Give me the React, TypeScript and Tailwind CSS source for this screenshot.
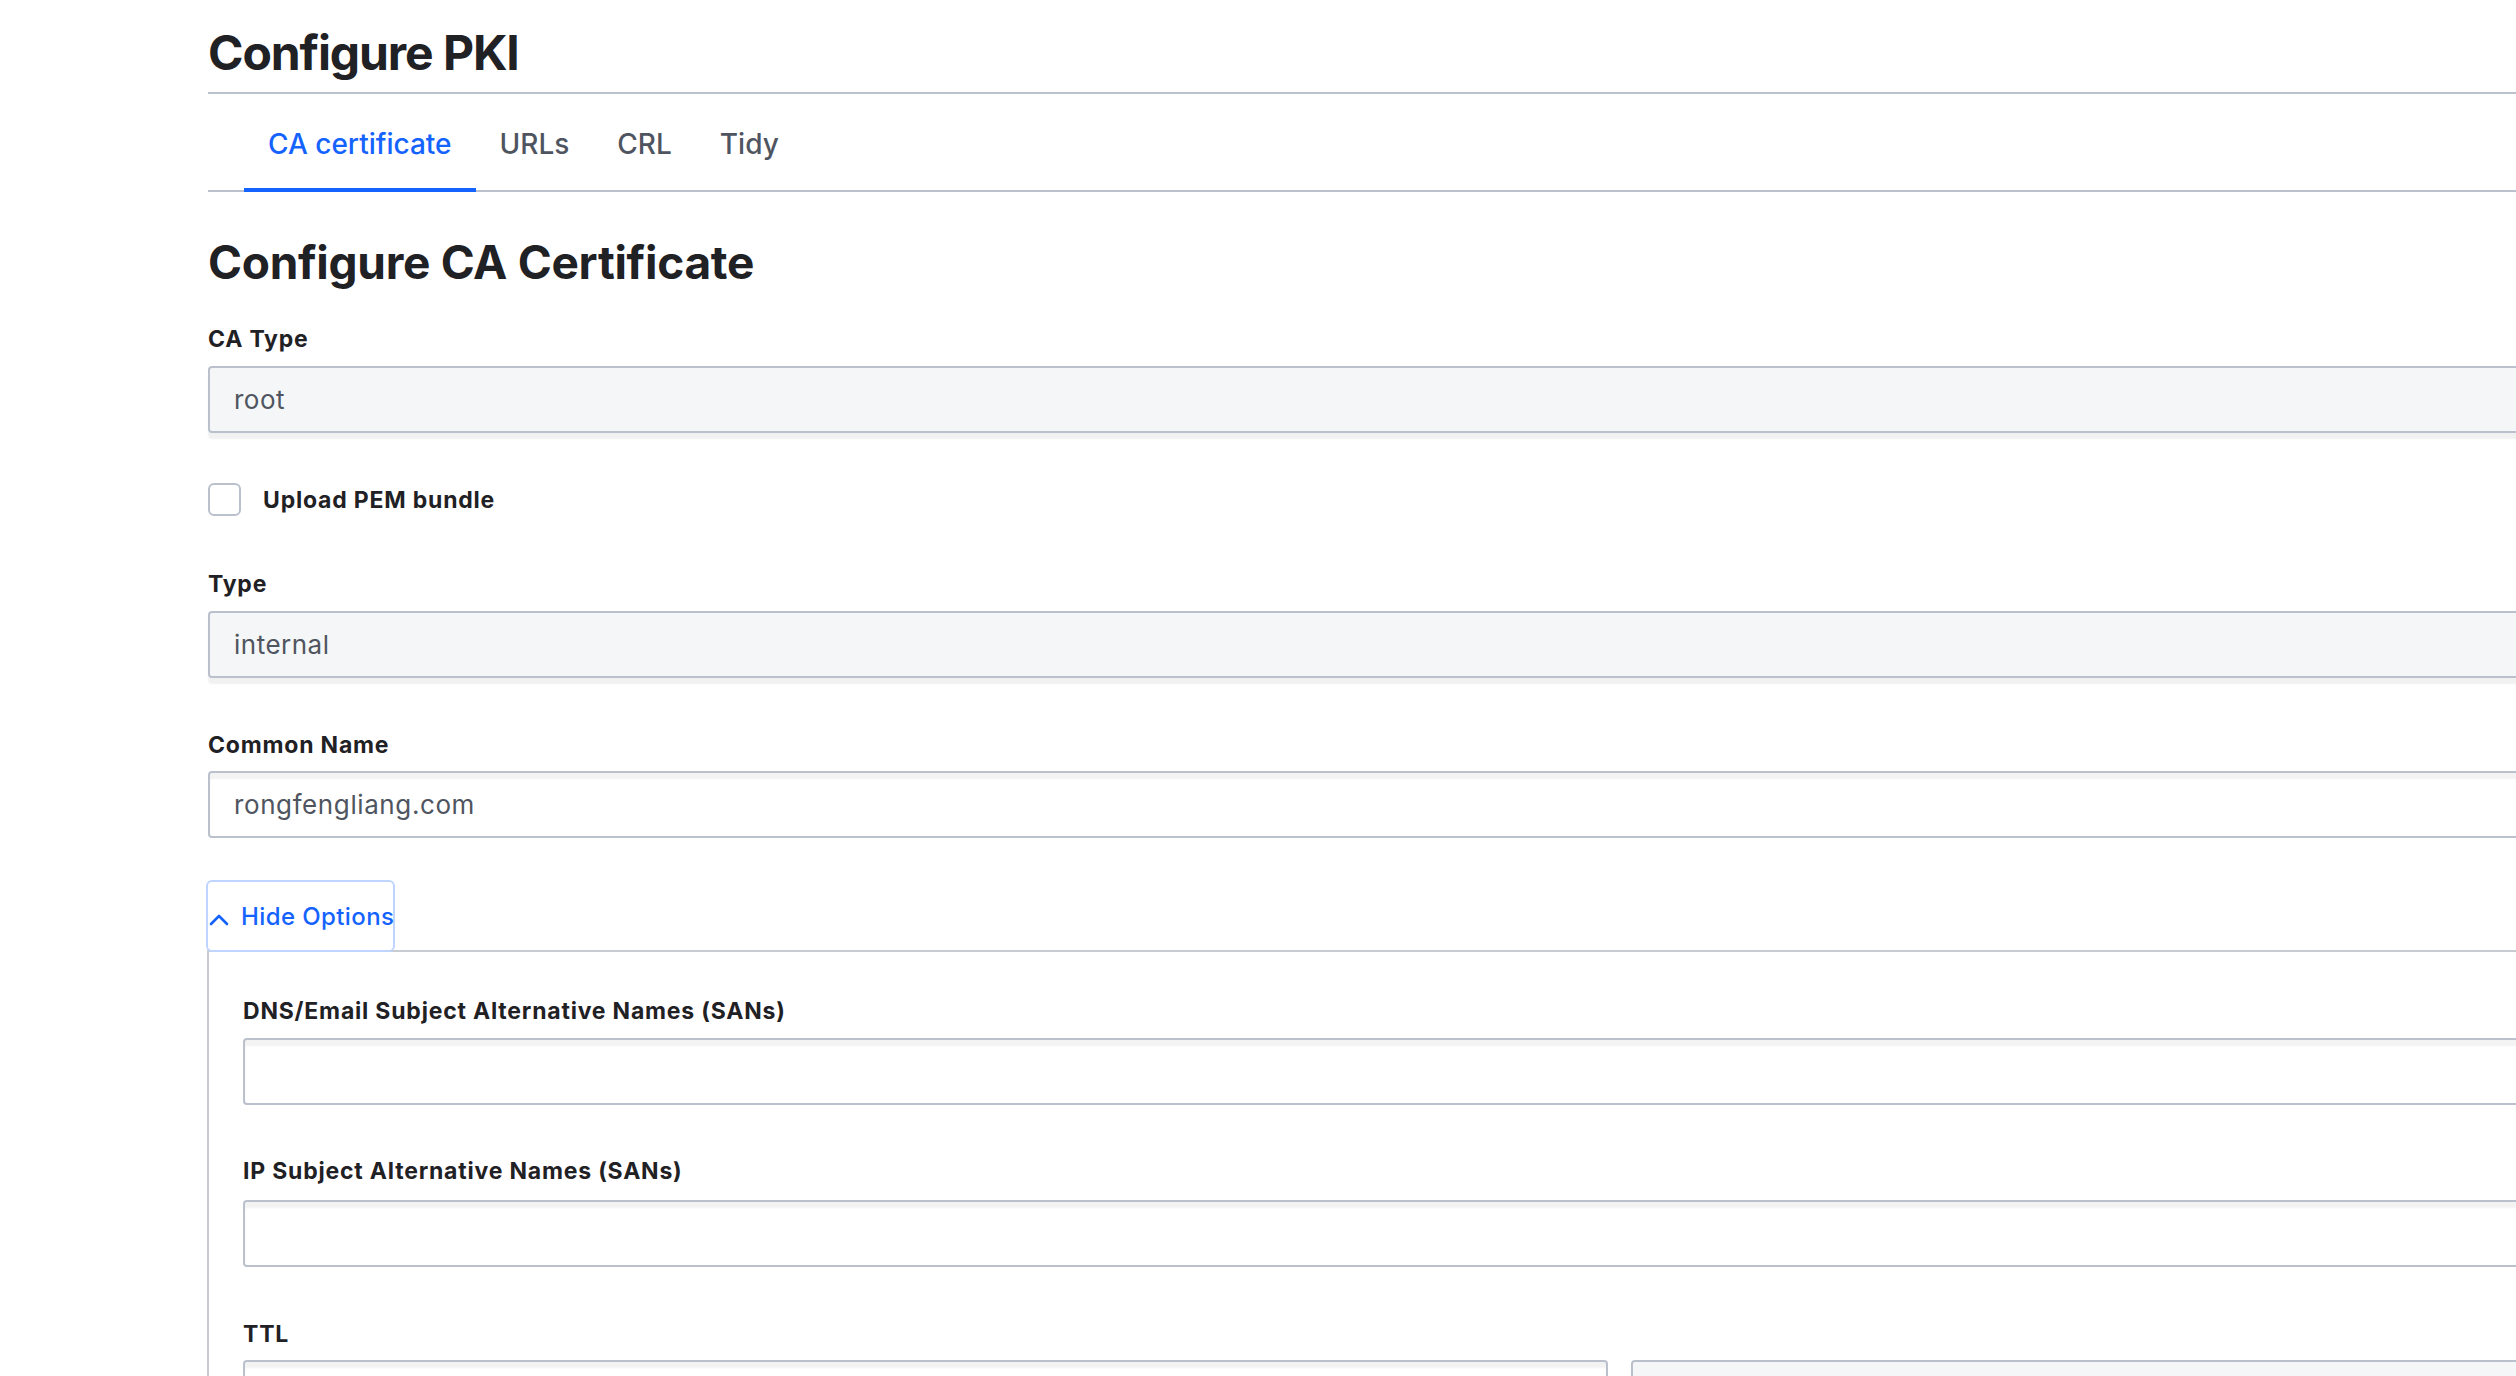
import React from "react";

const Label = ({ children, className = "" }: { children: React.ReactNode; className?: string }) => (
  <div className={`text-[23px] leading-[28px] font-bold tracking-[0.8px] text-[#1f2124] ${className}`}>{children}</div>
);

const SelectBox = ({ value, className = "" }: { value?: string; className?: string }) => (
  <div
    className={`h-[67px] bg-[#f5f6f7] border-2 border-[#bac1cc] rounded-[4px] shadow-[0_6px_2px_rgba(10,10,10,0.06)] flex items-center pl-[24px] text-[26px] tracking-[0.5px] text-[#4f5560] ${className}`}
  >
    {value}
  </div>
);

const TextInput = ({ value, className = "" }: { value?: string; className?: string }) => (
  <div
    className={`h-[67px] bg-white border-2 border-[#bac1cc] rounded-[4px] shadow-[inset_0_6px_2px_rgba(10,10,10,0.05)] flex items-center pl-[24px] text-[26px] tracking-[0.6px] text-[#4f5560] ${className}`}
  >
    {value}
  </div>
);

export default function App() {
  const tabs = ["CA certificate", "URLs", "CRL", "Tidy"];
  return (
    <div className="w-[2516px] h-[1376px] overflow-hidden bg-white font-['Inter',sans-serif]">
      <div className="ml-[208px] w-[3000px]">
        <h1 className="mt-[29px] text-[48px] leading-none font-bold text-[#1f2124] tracking-[-1.1px] pb-[15px] border-b-2 border-[#bac1cc]">
          Configure PKI
        </h1>
        <nav className="flex border-b-2 border-[#bac1cc] pl-[36px]">
          {tabs.map((t, i) => (
            <div
              key={t}
              className={`px-[24px] pt-[36px] pb-[30px] -mb-[2px] border-b-[4px] text-[28px] leading-[28px] font-medium ${
                i === 0 ? "border-[#1563ff] text-[#1563ff]" : "border-transparent text-[#4f5560]"
              }`}
            >
              {t}
            </div>
          ))}
        </nav>
        <h2 className="mt-[47px] text-[46px] leading-none font-bold text-[#1f2124] tracking-[-0.3px]">
          Configure CA Certificate
        </h2>

        <Label className="mt-[40px]">CA Type</Label>
        <SelectBox value="root" className="mt-[13px]" />

        <div className="mt-[50px] flex items-center">
          <div className="w-[33px] h-[33px] border-2 border-[#bac1cc] rounded-[6px] bg-white" />
          <span className="ml-[22px] text-[23px] leading-[28px] font-bold tracking-[0.8px] text-[#1f2124]">Upload PEM bundle</span>
        </div>

        <Label className="mt-[54px]">Type</Label>
        <SelectBox value="internal" className="mt-[13px]" />

        <Label className="mt-[53px]">Common Name</Label>
        <TextInput value="rongfengliang.com" className="mt-[12px]" />

        <div className="mt-[42px] relative z-10 -mb-[2px] w-[189px] h-[72px] border-2 border-[#bfd4ff] rounded-[6px] bg-white flex items-center -ml-[2px] pt-[2px]">
          <svg width="20" height="12" viewBox="0 0 20 12" className="ml-[1px] mt-[6px] shrink-0">
            <polyline points="2,10 10,2 18,10" fill="none" stroke="#1563ff" strokeWidth="2.6" strokeLinecap="round" strokeLinejoin="round" />
          </svg>
          <span className="ml-[12px] text-[24px] leading-[28px] font-medium tracking-[0.4px] text-[#1563ff] whitespace-nowrap">Hide Options</span>
        </div>
        <div className="border-t-2 border-l-2 border-[#c8cbd1] pl-[34px] pt-[45px] -ml-[1px] h-[500px]">
          <Label>DNS/Email Subject Alternative Names (SANs)</Label>
          <TextInput className="mt-[13px]" />
          <Label className="mt-[52px]">IP Subject Alternative Names (SANs)</Label>
          <TextInput className="mt-[15px]" />
          <Label className="mt-[53px]">TTL</Label>
          <div className="mt-[12px] flex gap-[23px]">
            <TextInput className="w-[1365px]" />
            <SelectBox className="flex-1" />
          </div>
        </div>
      </div>
    </div>
  );
}
